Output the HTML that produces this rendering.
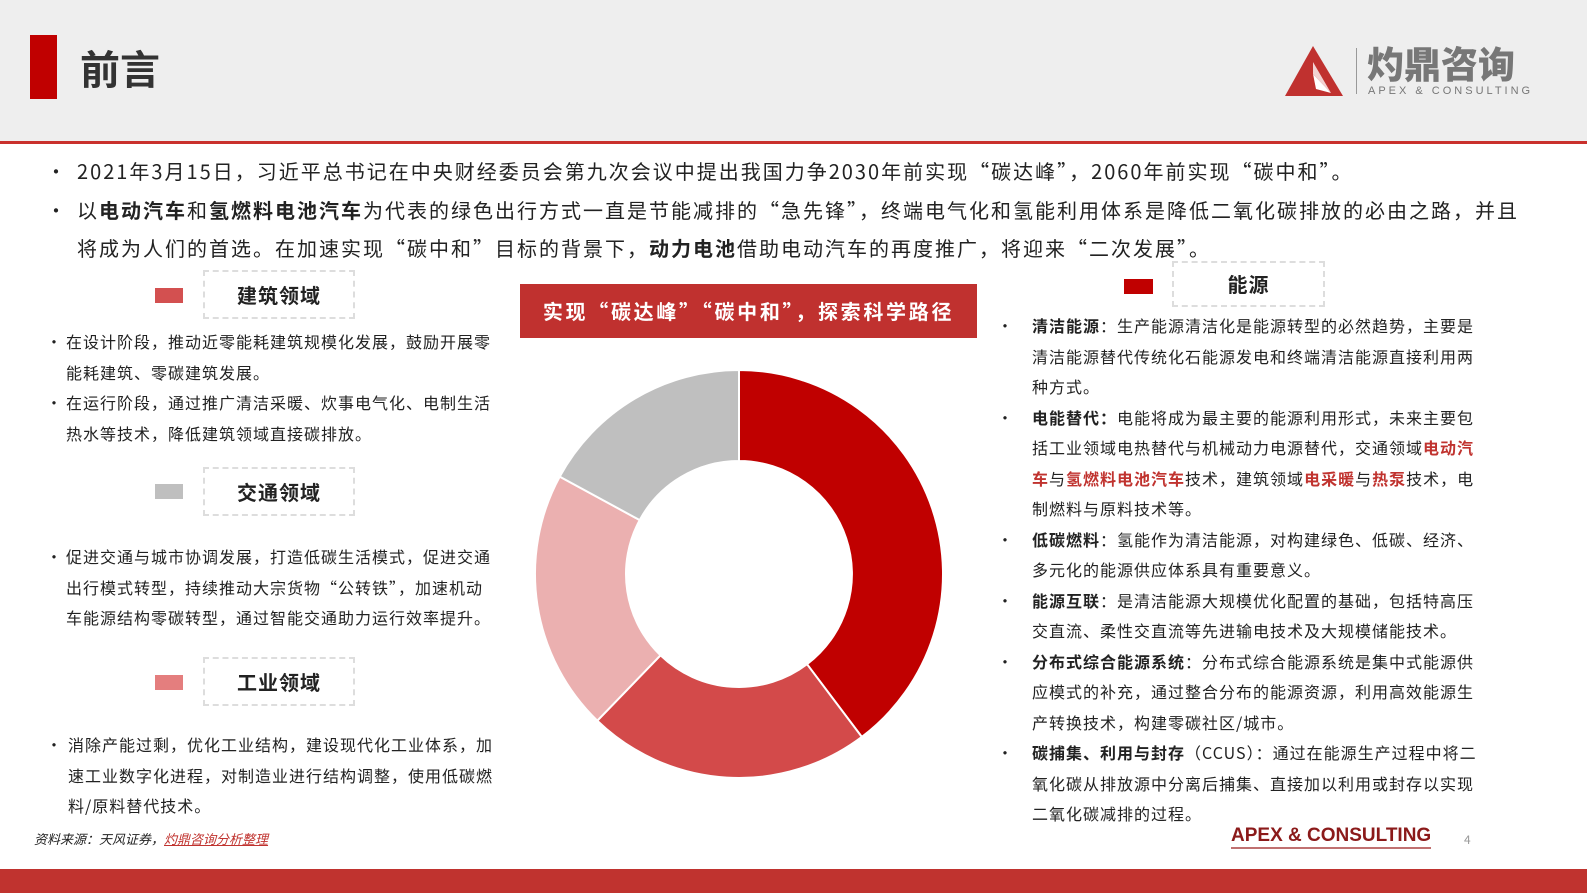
<!DOCTYPE html>
<html><head><meta charset="utf-8"><style>
*{margin:0;padding:0;box-sizing:border-box}
body{width:1587px;height:893px;position:relative;background:#fff;font-family:"Noto Sans CJK SC","Liberation Sans",sans-serif;color:#222;overflow:hidden}
.abs{position:absolute}
.hdr{left:0;top:0;width:1587px;height:141px;background:#eeeeee}
.line{left:0;top:141px;width:1587px;height:3px;background:#c9302c}
.t{font-size:20px;white-space:nowrap;letter-spacing:2px;line-height:28px}
.s{font-size:16px;line-height:30.5px;white-space:nowrap;letter-spacing:1px}
.box{border:2px dashed #ddd;font-weight:bold;font-size:20px;text-align:center;letter-spacing:1px}
b{font-weight:bold}
.r{color:#c0332f;font-weight:bold}
</style></head><body>
<div class="abs hdr"></div>
<div class="abs" style="left:30px;top:35px;width:27px;height:64px;background:#c00000"></div>
<div class="abs" style="left:80px;top:38px;font-size:40px;font-weight:bold;color:#333;line-height:58px">前言</div>
<svg class="abs" style="left:1283px;top:44px" width="62" height="54"><polygon points="30,2 60,52 2,52" fill="#c0312f"/><polygon points="30,30 48,49 33,45" fill="#fff"/><polygon points="30,18 30,30 48,49" fill="#f2d2d2"/></svg>
<div class="abs" style="left:1356px;top:48px;width:1px;height:46px;background:#999"></div>
<div class="abs" style="left:1367px;top:38px;font-size:37px;font-weight:900;color:#777;line-height:48px">灼鼎咨询</div>
<div class="abs" style="left:1368px;top:85px;font-size:11px;color:#777;letter-spacing:3px;font-family:'Liberation Sans',sans-serif">APEX &amp; CONSULTING</div>
<div class="abs line"></div>

<div class="abs t" style="left:46px;top:157px">•</div>
<div class="abs t" style="left:77px;top:157px">2021年3月15日，习近平总书记在中央财经委员会第九次会议中提出我国力争2030年前实现“碳达峰”，2060年前实现“碳中和”。</div>
<div class="abs t" style="left:46px;top:196px">•</div>
<div class="abs t" style="left:77px;top:196px">以<b>电动汽车</b>和<b>氢燃料电池汽车</b>为代表的绿色出行方式一直是节能减排的“急先锋”，终端电气化和氢能利用体系是降低二氧化碳排放的必由之路，并且</div>
<div class="abs t" style="left:77px;top:234px">将成为人们的首选。在加速实现“碳中和”目标的背景下，<b>动力电池</b>借助电动汽车的再度推广，将迎来“二次发展”。</div>

<div class="abs" style="left:155px;top:288px;width:28px;height:15px;background:#d35050"></div>
<div class="abs box" style="left:203px;top:270px;width:152px;height:49px;line-height:45px">建筑领域</div>
<div class="abs s" style="left:46px;top:326px">•<br>&nbsp;<br>•</div>
<div class="abs s" style="left:66px;top:326px">在设计阶段，推动近零能耗建筑规模化发展，鼓励开展零<br>能耗建筑、零碳建筑发展。<br>在运行阶段，通过推广清洁采暖、炊事电气化、电制生活<br>热水等技术，降低建筑领域直接碳排放。</div>

<div class="abs" style="left:155px;top:484px;width:28px;height:15px;background:#bfbfbf"></div>
<div class="abs box" style="left:203px;top:467px;width:152px;height:49px;line-height:45px">交通领域</div>
<div class="abs s" style="left:46px;top:541px">•</div>
<div class="abs s" style="left:66px;top:541px">促进交通与城市协调发展，打造低碳生活模式，促进交通<br>出行模式转型，持续推动大宗货物“公转铁”，加速机动<br>车能源结构零碳转型，通过智能交通助力运行效率提升。</div>

<div class="abs" style="left:155px;top:675px;width:28px;height:15px;background:#e47e7e"></div>
<div class="abs box" style="left:203px;top:657px;width:152px;height:49px;line-height:45px">工业领域</div>
<div class="abs s" style="left:46px;top:729px">•</div>
<div class="abs s" style="left:68px;top:729px">消除产能过剩，优化工业结构，建设现代化工业体系，加<br>速工业数字化进程，对制造业进行结构调整，使用低碳燃<br>料/原料替代技术。</div>

<div class="abs" style="left:34px;top:829px;font-size:13px;font-style:italic">资料来源：天风证券，<span style="color:#c0332f;text-decoration:underline">灼鼎咨询分析整理</span></div>

<div class="abs" style="left:520px;top:284px;width:457px;height:54px;background:#c0312f;color:#fff;font-size:20px;font-weight:bold;text-align:center;line-height:54px;letter-spacing:2.7px">实现“碳达峰”“碳中和”，探索科学路径</div>

<svg class="abs" style="left:0;top:0" width="1587" height="893">
<g stroke="#fff" stroke-width="2">
<path d="M739,370 A204,204 0 0 1 861.8,736.9 L807,664.2 A113,113 0 0 0 739,461 Z" fill="#c00000"/>
<path d="M861.8,736.9 A204,204 0 0 1 597.3,720.7 L660.5,655.3 A113,113 0 0 0 807,664.2 Z" fill="#d34a4a"/>
<path d="M597.3,720.7 A204,204 0 0 1 559.7,476.6 L639.7,520.1 A113,113 0 0 0 660.5,655.3 Z" fill="#ebb0b0"/>
<path d="M559.7,476.6 A204,204 0 0 1 739,370 L739,461 A113,113 0 0 0 639.7,520.1 Z" fill="#bfbfbf"/>
</g></svg>

<div class="abs" style="left:1124px;top:279px;width:29px;height:15px;background:#c00000"></div>
<div class="abs box" style="left:1172px;top:261px;width:153px;height:46px;line-height:42px">能源</div>
<div class="abs s" style="left:997px;top:310px">•<br>&nbsp;<br>&nbsp;<br>•<br>&nbsp;<br>&nbsp;<br>&nbsp;<br>•<br>&nbsp;<br>•<br>&nbsp;<br>•<br>&nbsp;<br>&nbsp;<br>•</div>
<div class="abs s" style="left:1032px;top:310px;letter-spacing:1px"><b>清洁能源</b>：生产能源清洁化是能源转型的必然趋势，主要是<br>清洁能源替代传统化石能源发电和终端清洁能源直接利用两<br>种方式。<br><b>电能替代：</b>电能将成为最主要的能源利用形式，未来主要包<br>括工业领域电热替代与机械动力电源替代，交通领域<span class="r">电动汽</span><br><span class="r">车</span>与<span class="r">氢燃料电池汽车</span>技术，建筑领域<span class="r">电采暖</span>与<span class="r">热泵</span>技术，电<br>制燃料与原料技术等。<br><b>低碳燃料</b>：氢能作为清洁能源，对构建绿色、低碳、经济、<br>多元化的能源供应体系具有重要意义。<br><b>能源互联</b>：是清洁能源大规模优化配置的基础，包括特高压<br>交直流、柔性交直流等先进输电技术及大规模储能技术。<br><b>分布式综合能源系统</b>：分布式综合能源系统是集中式能源供<br>应模式的补充，通过整合分布的能源资源，利用高效能源生<br>产转换技术，构建零碳社区/城市。<br><b>碳捕集、利用与封存</b>（CCUS）：通过在能源生产过程中将二<br>氧化碳从排放源中分离后捕集、直接加以利用或封存以实现<br>二氧化碳减排的过程。</div>

<div class="abs" style="left:1231px;top:824px;font-size:19px;font-weight:bold;color:#8b1a1a;border-bottom:2px solid #c07070;line-height:23px;font-family:'Liberation Sans',sans-serif">APEX &amp; CONSULTING</div>
<div class="abs" style="left:1464px;top:831px;font-size:12px;color:#999">4</div>
<div class="abs" style="left:0;top:869px;width:1587px;height:24px;background:#c0332f"></div>
</body></html>
